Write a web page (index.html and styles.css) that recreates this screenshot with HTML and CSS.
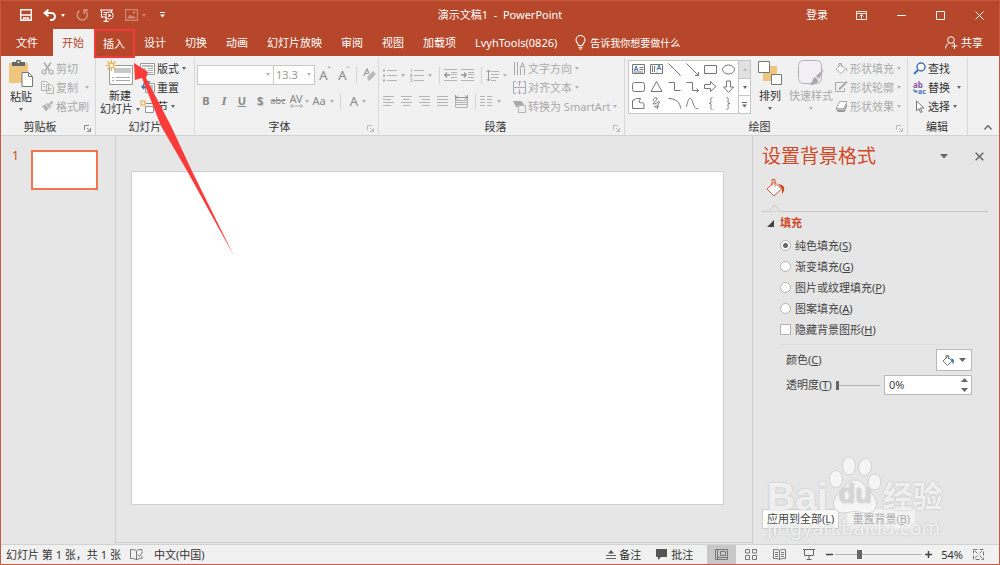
FILE: index.html
```html
<!DOCTYPE html>
<html lang="zh-CN">
<head>
  <meta charset="UTF-8">
  <meta name="viewport" content="width=device-width, initial-scale=1.0">
  <title>演示文稿1 - PowerPoint</title>
  <link rel="stylesheet" href="styles.css">
</head>
<body>
  <div class="window">
    <!-- 标题栏 -->
    <header class="titlebar">
      <div class="quick">
        <button type="button" aria-label="保存"><svg width="12" height="12" viewBox="0 0 12 12"><path d="M.7.7h10.6v10.6H.7z" fill="none" stroke="#fff" stroke-width="1.4"/><path d="M1 6h10M3.500 9h5v2.500h-5z" stroke="#fff" fill="none" stroke-width="1.300"/></svg></button>
        <button type="button" class="undo" aria-label="撤消"><svg width="14" height="12" viewBox="0 0 14 12"><path d="M2 4h6.500a3.500 3.500 0 0 1 0 7H7M5.500.7 1.500 4l4 3.300" fill="none" stroke="#fff" stroke-width="2"/></svg><i class="caret"></i></button>
        <button type="button" class="dim" aria-label="重复"><svg width="13" height="13" viewBox="0 0 13 13"><path d="M8.500 1.500a5 5 0 1 1-5 .3M8 5V1h4" fill="none" stroke="#fff" stroke-width="1.800"/></svg></button>
        <button type="button" class="play" aria-label="从头开始"><svg width="14" height="13" viewBox="0 0 14 13"><path d="M0 1h13M1.500 1v7h4M11.500 1v2M3.500 3.500h4M3.500 5.500h2M6 8v4M3.500 12.300h5" fill="none" stroke="#fff" stroke-width="1.200"/><circle cx="9.500" cy="6.500" r="3.700" fill="none" stroke="#fff"/><path d="M8.500 4.500v4l3-2z" fill="#fff"/></svg></button>
        <button type="button" class="dim undo" aria-label="图片"><svg width="13" height="12" viewBox="0 0 13 12"><path d="M.6.6h11.800v10.800H.6z" fill="none" stroke="#fff" stroke-width="1.200"/><path d="M2 9.500 5 5.500l2 2 1.500-1 2.500 3z" fill="#fff"/><circle cx="9" cy="3.500" r="1.300" fill="#fff"/></svg><i class="caret"></i></button>
        <button type="button" class="more" aria-label="自定义"><svg width="5" height="6" viewBox="0 0 5 6"><path d="M0 .5h5" stroke="#fff"/><path d="M0 2.500h5L2.500 5.500z" fill="#fff"/></svg></button>
      </div>
      <div class="doc-title">演示文稿1&nbsp; -&nbsp; PowerPoint</div>
      <div class="win-buttons">
        <button type="button" class="login">登录</button>
        <button type="button" aria-label="功能区显示选项"><svg width="11" height="9" viewBox="0 0 11 9"><path d="M.5.5h10v8H.5zM1 2.500h9M5.500 8V4M3.500 5.500l2-2 2 2" fill="none" stroke="#fff" stroke-width=".9"/></svg></button>
        <button type="button" aria-label="最小化"><svg width="9" height="9" viewBox="0 0 9 9"><path d="M0 4.500h9" stroke="#fff"/></svg></button>
        <button type="button" aria-label="最大化"><svg width="9" height="9" viewBox="0 0 9 9"><path d="M.5.5h8v8h-8z" stroke="#fff" fill="none"/></svg></button>
        <button type="button" aria-label="关闭"><svg width="9" height="9" viewBox="0 0 9 9"><path d="m.5.5 8 8m0-8-8 8" stroke="#fff"/></svg></button>
      </div>
    </header>

    <!-- 选项卡 -->
    <nav class="tabs">
      <button type="button" class="tab file">文件</button>
      <button type="button" class="tab active">开始</button>
      <button type="button" class="tab marked">插入</button>
      <button type="button" class="tab">设计</button>
      <button type="button" class="tab">切换</button>
      <button type="button" class="tab">动画</button>
      <button type="button" class="tab">幻灯片放映</button>
      <button type="button" class="tab">审阅</button>
      <button type="button" class="tab">视图</button>
      <button type="button" class="tab">加载项</button>
      <button type="button" class="tab">LvyhTools(0826)</button>
      <button type="button" class="tell"><svg width="11" height="15" viewBox="0 0 11 15"><path d="M3.500 10.500C3.500 8.500 1 7.500 1 5a4.500 4.500 0 0 1 9 0c0 2.500-2.500 3.500-2.500 5.500zM3.500 12.300h4M4 14h3" fill="none" stroke="#fff" stroke-width="1.100"/></svg>告诉我你想要做什么</button>
      <button type="button" class="share"><svg width="13" height="13" viewBox="0 0 13 13"><circle cx="6" cy="4" r="3.300" fill="none" stroke="#fff"/><path d="M.6 12.500C.8 9.500 2 8 4 7M7.500 7l1 .7M9.500 7v6M6.500 10h6" fill="none" stroke="#fff"/></svg>共享</button>
    </nav>

    <!-- 功能区 -->
    <section class="ribbon">
      <div class="group clipboard">
        <div class="group-body">
          <button type="button" class="big"><svg width="26" height="27" viewBox="0 0 26 27"><path d="M1 3h19v20H1z" fill="#efc680"/><path d="M4 2h4a2.500 2.500 0 0 1 5 0h4v4H4z" fill="#666"/><path d="M9.500 1.500h2v1.500h-2z" fill="#f1f1f1"/><path d="M14 12.500h6.500l4 4v10H14z" fill="#fff" stroke="#777"/><path d="M20.500 12.500v4h4" fill="none" stroke="#777"/></svg><span>粘贴</span><i class="caret"></i></button>
          <div class="stack off">
            <button type="button"><svg width="13" height="13" viewBox="0 0 13 13"><path d="m3 .5 5.500 8M10 .5l-5.500 8" stroke="#aaa" stroke-width="1.500"/><circle cx="3" cy="10" r="2" fill="none" stroke="#aaa" stroke-width="1.200"/><circle cx="10" cy="10" r="2" fill="none" stroke="#aaa" stroke-width="1.200"/></svg>剪切</button>
            <button type="button"><svg width="13" height="13" viewBox="0 0 13 13"><path d="M.5.500h5l2 2v7h-7zM5.500 3.500h4.500l2.500 2.500v6.500h-7z" fill="#f1f1f1" stroke="#b4b4b4"/><path d="M2 3.500h2M2 5.500h2M7 7.500h3.500M7 9.500h3.500" stroke="#b4b4b4"/></svg>复制<i class="caret push"></i></button>
            <button type="button"><svg width="13" height="13" viewBox="0 0 13 13"><path d="m1 6 4 5.500 3-3-3.500-4zM5 4l4 4.500L10.500 7 7 3zM8 3.500 11 .8l1.500 1.500-2.500 3z" fill="#b4b4b4"/></svg>格式刷</button>
          </div>
        </div>
        <div class="group-name">剪贴板<svg class="launch" width="7" height="7" viewBox="0 0 7 7"><path d="M.5 5V.5H5M3 3l3 3M6.500 3v3.500H3" fill="none" stroke="#888"/></svg></div>
      </div>

      <div class="group slides">
        <div class="group-body">
          <button type="button" class="big"><svg width="28" height="26" viewBox="0 0 28 26"><path d="M3.500 5.500h23v19h-23z" fill="#fff" stroke="#999"/><path d="M8 8h17v5H8z" fill="#c8c8c8"/><path d="M6 17.500h2m2 0h14M6 20.500h2m2 0h14" stroke="#aaa"/><path d="M5.500 0v11M0 5.500h11M1.500 1.500l8 8M9.500 1.500l-8 8" stroke="#eba94b" stroke-width="1.200"/><circle cx="5.500" cy="5.500" r="2.200" fill="#fff" stroke="#eba94b"/></svg><span>新建</span><span>幻灯片<i class="caret"></i></span></button>
          <div class="stack">
            <button type="button"><svg width="15" height="13" viewBox="0 0 15 13"><path d="M.5 1.500h14v11H.5z" fill="#fff" stroke="#999"/><path d="M2 3h11v2H2zM2 6h4v5H2z" fill="#bbb"/><path d="M7.500 6.500h5.500M7.500 8.500h5.500M7.500 10.500h5.500" stroke="#aaa"/></svg>版式<i class="caret"></i></button>
            <button type="button"><svg width="15" height="13" viewBox="0 0 15 13"><path d="M5.500 2.500h9v9h-9z" fill="#fff" stroke="#999"/><path d="M10 4h3v6h-3z" fill="#bbb"/><path d="M10 1C6 0 3 2 3.500 6.500M1.500 5l2 2.500 2-2" fill="none" stroke="#3e74b8" stroke-width="1.500"/></svg>重置</button>
            <button type="button"><svg width="15" height="13" viewBox="0 0 15 13"><path d="M5.500 6.500h8v6h-8z" fill="#fff" stroke="#999"/><path d="M6 3.500h8" stroke="#888"/><path d="M1 1h4v4H1z" fill="none" stroke="#eba94b" stroke-width="1.200"/></svg>节<i class="caret"></i></button>
          </div>
        </div>
        <div class="group-name">幻灯片</div>
      </div>

      <div class="group font off">
        <div class="group-body">
          <div class="row">
            <span class="combo"><select class="font-name" aria-label="字体"><option></option></select><i class="caret"></i></span>
            <span class="combo"><select class="font-size" aria-label="字号"><option>13.3</option></select><i class="caret"></i></span>
            <button type="button" class="fmt grow">A<sup>ˆ</sup></button>
            <button type="button" class="fmt grow">A<sup>ˇ</sup></button>
            <i class="bar"></i>
            <button type="button" class="fmt" aria-label="清除格式"><svg width="13" height="14" viewBox="0 0 13 14"><path d="M.8 8 4 1l2 4.500M2 5.500h3" fill="none" stroke="#999" stroke-width="1.200"/><path d="m4 9 6-6 3 3-6 6.500H5z" fill="#bbb"/></svg></button>
          </div>
          <div class="row">
            <button type="button" class="fmt"><b>B</b></button>
            <button type="button" class="fmt serif"><b><em>I</em></b></button>
            <button type="button" class="fmt"><b><u>U</u></b></button>
            <button type="button" class="fmt shadow"><b>S</b></button>
            <button type="button" class="fmt small"><s>abc</s></button>
            <button type="button" class="fmt spacing">AV<svg width="13" height="4" viewBox="0 0 13 4"><path d="M1 2h11M2.500 0 .5 2l2 2M10.500 0l2 2-2 2" fill="none" stroke="#aaa"/></svg></button><i class="caret"></i>
            <button type="button" class="fmt wide">Aa<i class="caret"></i></button>
            <i class="bar"></i>
            <button type="button" class="fmt wide color">A<i class="caret"></i></button>
          </div>
        </div>
        <div class="group-name">字体<svg class="launch" width="7" height="7" viewBox="0 0 7 7"><path d="M.5 5V.5H5M3 3l3 3M6.500 3v3.500H3" fill="none" stroke="#bbb"/></svg></div>
      </div>

      <div class="group para off">
        <div class="group-body">
          <div class="para-left">
            <div class="row">
              <button type="button" class="list" aria-label="项目符号"><svg width="14" height="13" viewBox="0 0 14 13"><path d="M0 1.500h2M0 6.500h2M0 11.500h2" stroke="#aaa" stroke-width="2"/><path d="M4 1.500h10M4 6.500h10M4 11.500h10" stroke="#b4b4b4"/></svg><i class="caret"></i></button>
              <button type="button" class="list" aria-label="编号"><svg width="14" height="13" viewBox="0 0 14 13"><path d="M1.500 0v3M.5 5h1.500v1.500H.5V8H2M.5 10h1.500v2.500H.5" fill="none" stroke="#aaa" stroke-width=".8"/><path d="M4 1.500h10M4 6.500h10M4 11.500h10" stroke="#b4b4b4"/></svg><i class="caret"></i></button>
              <i class="bar"></i>
              <button type="button" class="al" aria-label="减少缩进"><svg width="13" height="12" viewBox="0 0 13 12"><path d="M0 .5h13M7 3.500h6M7 5.500h6M7 8.500h6M0 11.500h13" stroke="#b4b4b4"/><path d="M6 6H1m2-2.500L.7 6 3 8.500" fill="none" stroke="#999" stroke-width="1.300"/></svg></button>
              <button type="button" class="al" aria-label="增加缩进"><svg width="13" height="12" viewBox="0 0 13 12"><path d="M0 .5h13M7 3.500h6M7 5.500h6M7 8.500h6M0 11.500h13" stroke="#b4b4b4"/><path d="M0 6h5M3 3.500 5.300 6 3 8.500" fill="none" stroke="#999" stroke-width="1.300"/></svg></button>
              <i class="bar"></i>
              <button type="button" class="list" aria-label="行距"><svg width="13" height="13" viewBox="0 0 13 13"><path d="M5 2.500h8M5 5.500h8M5 8.500h8M5 11.500h5" stroke="#b4b4b4"/><path d="M2.500 1v11M.5 3l2-2 2 2M.5 10l2 2 2-2" fill="none" stroke="#999"/></svg><i class="caret"></i></button>
            </div>
            <div class="row">
              <button type="button" class="al" aria-label="左对齐"><svg width="11" height="10" viewBox="0 0 11 10"><path d="M0 .5h11M0 3.500h8M0 6.500h11M0 9.500h8" stroke="#b4b4b4"/></svg></button>
              <button type="button" class="al" aria-label="居中"><svg width="11" height="10" viewBox="0 0 11 10"><path d="M0 .5h11M2 3.500h7M0 6.500h11M2 9.500h7" stroke="#b4b4b4"/></svg></button>
              <button type="button" class="al" aria-label="右对齐"><svg width="11" height="10" viewBox="0 0 11 10"><path d="M0 .5h11M3 3.500h8M0 6.500h11M3 9.500h8" stroke="#b4b4b4"/></svg></button>
              <button type="button" class="al" aria-label="两端对齐"><svg width="11" height="10" viewBox="0 0 11 10"><path d="M0 .5h11M0 3.500h11M0 6.500h11M0 9.500h11" stroke="#b4b4b4"/></svg></button>
              <button type="button" class="al" aria-label="分散对齐"><svg width="13" height="13" viewBox="0 0 13 13"><path d="M.5 0v5M12.500 0v5M1 2.500h11M3 .5l-2 2 2 2M10 .5l2 2-2 2" fill="none" stroke="#999"/><path d="M.5 5.500h12v7H.5zM1 7.500h11M1 9.500h11" fill="none" stroke="#b4b4b4"/></svg></button>
              <i class="bar"></i>
              <button type="button" class="list cols" aria-label="分栏"><svg width="12" height="10" viewBox="0 0 12 10"><path d="M0 .5h5m2 0h5M0 3.500h5m2 0h5M0 6.500h5m2 0h5M0 9.500h5m2 0h5" stroke="#b4b4b4"/></svg><i class="caret"></i></button>
            </div>
          </div>
          <div class="stack">
            <button type="button"><svg width="13" height="14" viewBox="0 0 13 14"><path d="M1.500 0v13M4.500 0v13M7.500 7v6M11.500 7v6M7 7l2.500-6.500L12 7M8 4.500h3" fill="none" stroke="#aaa"/></svg>文字方向<i class="caret"></i></button>
            <button type="button"><svg width="13" height="13" viewBox="0 0 13 13"><path d="M3 .5H.5v12H3M10 .5h2.500v12H10" fill="none" stroke="#aaa"/><path d="M1 6.500h11M6.500 0v5M4.500 2l2-2 2 2M6.500 13V8M4.500 11l2 2 2-2" fill="none" stroke="#b9a5b4"/></svg>对齐文本<i class="caret"></i></button>
            <button type="button"><svg width="13" height="13" viewBox="0 0 13 13"><path d="M0 1h8l3 3-3 3H3z" fill="#aaa"/><path d="M5.500 5.500h7v7h-7z" fill="#f1edf1" stroke="#b4b4b4"/></svg>转换为 SmartArt<i class="caret"></i></button>
          </div>
        </div>
        <div class="group-name">段落<svg class="launch" width="7" height="7" viewBox="0 0 7 7"><path d="M.5 5V.5H5M3 3l3 3M6.500 3v3.500H3" fill="none" stroke="#bbb"/></svg></div>
      </div>

      <div class="group draw">
        <div class="group-body">
          <div class="gallery">
            <div class="shapes">
              <svg viewBox="0 0 13 13"><path d="M.5 1.500h12v9H.5z" class="ln"/><path d="m2 8 2-5 2 5M3 6.500h2" stroke="#3e74b8" fill="none"/><path d="M7.500 4.500h4M7.500 6.500h4M2 9h9" class="ln"/></svg>
              <svg viewBox="0 0 13 13"><path d="M.5 1.500h12v9H.5zM2.500 3v6M4.500 3v6M7 8.500v1" class="ln"/><path d="m7 7 2-5 2 5M8 5.500h2" stroke="#3e74b8" fill="none"/></svg>
              <svg viewBox="0 0 13 13"><path d="m.5.5 12 12" class="ln"/></svg>
              <svg viewBox="0 0 13 13"><path d="m.5.5 12 12M12.500 9v3.500H9" class="ln"/></svg>
              <svg viewBox="0 0 13 13"><path d="M.5 2.500h12v8H.5z" class="ln"/></svg>
              <svg viewBox="0 0 13 13"><ellipse cx="6.500" cy="6.500" rx="6" ry="4.500" class="ln"/></svg>
              <svg viewBox="0 0 13 13"><rect x=".5" y="2.500" width="12" height="9" rx="2" class="ln"/></svg>
              <svg viewBox="0 0 13 13"><path d="m6.500 1.500 5.500 10H1z" class="ln"/></svg>
              <svg viewBox="0 0 13 13"><path d="M.5 2.500h6v8h6" class="ln"/></svg>
              <svg viewBox="0 0 13 13"><path d="M.5 2.500h6v8h6M10.500 8.500l2 2-2 2" class="ln"/></svg>
              <svg viewBox="0 0 13 13"><path d="M.5 4.500h6V1.500l5.500 5-5.500 5v-3h-6z" class="ln"/></svg>
              <svg viewBox="0 0 13 13"><path d="M4.500 1v6H1.500l5 5.500 5-5.500h-3V1z" class="ln"/></svg>
              <svg viewBox="0 0 13 13"><path d="M.5 11.500v-8l4-2h4L7 5c2 2 5-1 5 3v3.500z" class="ln"/></svg>
              <svg viewBox="0 0 13 13"><path d="M4 4c-3-2 4-5 3-2S1 7 4 7s6-5 5-1-6 3-4 4 5-3 3 0l-1 2" class="ln"/></svg>
              <svg viewBox="0 0 13 13"><path d="M.5 1.500c7 0 12 4 12 10" class="ln"/></svg>
              <svg viewBox="0 0 13 13"><path d="M.5 9.500C3-2 5 0 7 6s3 6 5.500 5.500" class="ln"/></svg>
              <svg viewBox="0 0 13 13"><path d="M8.500.5C6 .5 7 3 7 5S6 6.500 5 6.500c1 0 2 0 2 1.500s-1 4.500 1.500 4.500" class="ln"/></svg>
              <svg viewBox="0 0 13 13"><path d="M4.500.5C7 .5 6 3 6 5s1 1.500 2 1.500C7 6.500 6 6.500 6 8s1 4.500-1.500 4.500" class="ln"/></svg>
            </div>
            <div class="scroller">
              <button type="button" class="up" aria-label="上一行"><i class="caret flip"></i></button>
              <button type="button" aria-label="下一行"><i class="caret"></i></button>
              <button type="button" aria-label="其他"><svg width="5" height="6" viewBox="0 0 5 6"><path d="M0 .5h5" stroke="#666"/><path d="M0 2.500h5L2.500 5.500z" fill="#666"/></svg></button>
            </div>
          </div>
          <button type="button" class="big"><svg width="26" height="26" viewBox="0 0 26 26"><path d="M10 6h10v8H10zM6 13h9v8H6z" fill="#efc680"/><path d="M1.500 1.500h11v11h-11zM14.500 14.500h10v10h-10z" fill="#fff" stroke="#777"/></svg><span>排列</span><i class="caret"></i></button>
          <button type="button" class="big styles off"><svg width="26" height="26" viewBox="0 0 26 26"><rect x=".5" y=".5" width="23" height="23" rx="5" fill="#f3edf5" stroke="#b4b4b4"/><path d="m26 9-8 7 3 3zM17 17l3.500 3.500c-2 4-6 5-9 4.500 3-1 2-6 5.500-8z" fill="#aaa"/></svg><span>快速样式</span><i class="caret"></i></button>
          <div class="stack off">
            <button type="button"><svg width="13" height="13" viewBox="0 0 13 13"><path d="m5.500 2.500 5 4.500-4.500 4.500L1 7zM4 5V1.500h2.500V5" fill="#fff" stroke="#aaa"/><path d="M10.500 5c2 1 2 3 1.500 5z" fill="#aaa"/></svg>形状填充<i class="caret"></i></button>
            <button type="button"><svg width="13" height="13" viewBox="0 0 13 13"><path d="M9 1.500H.5v9h9V7" fill="none" stroke="#aaa"/><path d="m4 8.500 8-8" stroke="#aaa" stroke-width="2"/></svg>形状轮廓<i class="caret"></i></button>
            <button type="button"><svg width="13" height="13" viewBox="0 0 13 13"><path d="M3 9.500h6l3-7v4L9.500 12H3L.5 9z" fill="#999"/><path d="M4.500 1.500h7.500l-3 7H1z" fill="#fff" stroke="#aaa"/></svg>形状效果<i class="caret"></i></button>
          </div>
        </div>
        <div class="group-name">绘图<svg class="launch" width="7" height="7" viewBox="0 0 7 7"><path d="M.5 5V.5H5M3 3l3 3M6.500 3v3.500H3" fill="none" stroke="#bbb"/></svg></div>
      </div>

      <div class="group edit">
        <div class="group-body">
          <div class="stack">
            <button type="button"><svg width="13" height="13" viewBox="0 0 13 13"><circle cx="8" cy="5" r="4" fill="#fff" stroke="#3e74b8" stroke-width="1.500"/><path d="m5 8-4 4" stroke="#3e74b8" stroke-width="2"/></svg>查找</button>
            <button type="button"><svg width="13" height="16" viewBox="0 0 13 16"><text x="0" y="8" class="ab">ab</text><text x="5" y="14" class="ac">ac</text><path d="M1 9v2.500h3M2.500 10 4 11.500 2.500 13" fill="none" stroke="#3e74b8"/></svg>替换<i class="caret push"></i></button>
            <button type="button"><svg width="13" height="13" viewBox="0 0 13 13"><path d="M3.500 1v10l2.500-2.500 1.500 4 1.500-.7-1.500-3.800H11z" fill="#fff" stroke="#777"/></svg>选择<i class="caret"></i></button>
          </div>
        </div>
        <div class="group-name">编辑</div>
      </div>
      <button type="button" class="collapse" aria-label="折叠功能区"><svg width="8" height="5" viewBox="0 0 8 5"><path d="m.5 4.500 3.500-4 3.500 4" fill="none" stroke="#666" stroke-width="1.300"/></svg></button>
    </section>

    <main class="work">
      <aside class="thumbs">
        <span class="num">1</span>
        <div class="thumb"></div>
      </aside>
      <div class="canvas"><div class="slide"></div></div>

      <!-- 设置背景格式 -->
      <aside class="pane">
        <div class="pane-head">
          <h2>设置背景格式</h2>
          <button type="button" aria-label="选项"><svg width="8" height="5" viewBox="0 0 8 5"><path d="M0 0h8L4 4.500z" fill="#666"/></svg></button>
          <button type="button" aria-label="关闭"><svg width="9" height="9" viewBox="0 0 9 9"><path d="m.7.7 7.600 7.600m0-7.600L.7 8.300" stroke="#666" stroke-width="1.500"/></svg></button>
        </div>
        <div class="pane-tabs">
          <button type="button" aria-label="填充"><svg width="20" height="20" viewBox="0 0 20 20"><path d="m8.500 4 7 7-7.500 7-7-7z" fill="#fff" stroke="#d9532c"/><path d="M6 7.500V1.500h3v7" fill="none" stroke="#d9532c"/><path d="M12.500 6c7 1 7 6 3.500 10V11z" fill="#d24726"/></svg></button>
        </div>
        <svg class="notch" width="15" height="8" viewBox="0 0 15 8"><path d="M0 7.500h1.500l6-6.500 6 6.500H15" fill="#e6e6e6" stroke="#c6c6c6"/></svg>
        <h3><svg width="7" height="7" viewBox="0 0 7 7"><path d="M7 0v7H0z" fill="#444"/></svg>填充</h3>
        <div class="options">
          <label><input type="radio" name="fill" checked><span>纯色填充(<u>S</u>)</span></label>
          <label><input type="radio" name="fill"><span>渐变填充(<u>G</u>)</span></label>
          <label><input type="radio" name="fill"><span>图片或纹理填充(<u>P</u>)</span></label>
          <label><input type="radio" name="fill"><span>图案填充(<u>A</u>)</span></label>
          <label><input type="checkbox"><span>隐藏背景图形(<u>H</u>)</span></label>
        </div>
        <div class="props">
          <div class="prop">
            <label for="color">颜色(<u>C</u>)</label>
            <button type="button" id="color" class="color-btn"><svg width="13" height="13" viewBox="0 0 13 13"><path d="m5.500 2.500 4.500 4.500-4.500 4.500L1 7zM4 5V1.500h2.500V5" fill="#fff" stroke="#777"/><path d="M9 4.500c3.500 0 3.500 3 2 6z" fill="#3e74b8"/></svg><svg width="7" height="4" viewBox="0 0 7 4"><path d="M0 0h7L3.500 4z" fill="#666"/></svg></button>
          </div>
          <div class="prop">
            <label for="alpha">透明度(<u>T</u>)</label>
            <input type="range" class="alpha-range" min="0" max="100" value="0" aria-label="透明度">
            <span class="spin"><input type="text" id="alpha" value="0%"><svg width="7" height="14" viewBox="0 0 7 14"><path d="M0 4h7L3.500 0zM0 10h7L3.500 14z" fill="#666"/></svg></span>
          </div>
        </div>
        <div class="pane-foot">
          <button type="button">应用到全部(<u>L</u>)</button>
          <button type="button" disabled>重置背景(<u>B</u>)</button>
        </div>
        <div class="watermark">
          <div class="mark-main"><span class="bai">Bai</span><span class="paw"><svg width="54" height="58" viewBox="0 0 54 58"><g fill="#f8f8f8" stroke="#cfcfcf"><ellipse cx="8" cy="23" rx="6.500" ry="8.500"/><ellipse cx="21" cy="10" rx="6.500" ry="9"/><ellipse cx="37" cy="11" rx="6.500" ry="8.500" transform="rotate(10 37 11)"/><ellipse cx="46.500" cy="26" rx="6.500" ry="8"/><path d="M27 24c8 0 10 8 16 13 8 7 8 19-4 20-5 0-8-1.500-12-1.500S20 57 15 57C3 56 3 44 11 37c6-5 8-13 16-13z"/></g></svg><span class="du">du</span></span><span class="jy">经验</span></div>
          <div class="mark-url">jingyan.baidu.com</div>
        </div>
      </aside>
    </main>

    <!-- 状态栏 -->
    <footer class="status">
      <span>幻灯片 第 1 张，共 1 张</span>
      <button type="button" class="proof" aria-label="拼写检查"><svg width="13" height="11" viewBox="0 0 13 11"><path d="M6.500 2C5 .5 3 .5.500.5v9c2.500 0 4.500 0 6 1.500zM6.500 2c1-1.500 3-1.500 5.500-1.500v2M12 7v2.500c-2 0-4 0-5.500 1.500" fill="none" stroke="#777"/><path d="m8 5.500 1.500 2L12.500 3" fill="none" stroke="#777"/></svg></button>
      <span>中文(中国)</span>
      <div class="status-right">
        <button type="button" class="note"><svg width="10" height="9" viewBox="0 0 10 9"><path d="M2 3.500h6L5 0z" fill="#555"/><path d="M0 5.500h10M0 8.500h10" stroke="#666"/></svg>备注</button>
        <button type="button" class="note"><svg width="13" height="11" viewBox="0 0 13 11"><path d="M1 0h11v8H6l-3 3V8H1z" fill="#555"/></svg>批注</button>
        <button type="button" class="view on" aria-label="普通视图"><svg width="13" height="11" viewBox="0 0 13 11"><path d="M.5.5h12v10H.5zM2.500 1v9M5.500 2.500h5v4h-5zM3 8.500h9" fill="none" stroke="#777"/></svg></button>
        <button type="button" class="view" aria-label="幻灯片浏览"><svg width="12" height="11" viewBox="0 0 12 11"><path d="M.5.5h4v3.500h-4zM7.500.5h4v3.500h-4zM.5 6.500h4v4h-4zM7.500 6.500h4v4h-4z" fill="none" stroke="#777"/></svg></button>
        <button type="button" class="view" aria-label="阅读视图"><svg width="13" height="11" viewBox="0 0 13 11"><path d="M6.500 1.500C5 .5 3 .5.500.5v9c2.500 0 4.500 0 6 1 1.500-1 3.500-1 6-1v-9c-2.500 0-4.500 0-6 1v9M2 3.500h3M2 5.500h3M2 7.500h3M8 3.500h3M8 5.500h3M8 7.500h3" fill="none" stroke="#777"/></svg></button>
        <button type="button" class="view" aria-label="幻灯片放映"><svg width="12" height="11" viewBox="0 0 12 11"><path d="M0 .5h12M1.500 1v5.500h9V1M6 7v3M3.500 10.500h5" fill="none" stroke="#666"/></svg></button>
        <button type="button" class="step" aria-label="缩小"><svg width="7" height="7" viewBox="0 0 7 7"><path d="M0 3.500h7" stroke="#444" stroke-width="1.500"/></svg></button>
        <input type="range" class="zoom" min="0" max="100" value="26" aria-label="缩放">
        <button type="button" class="step" aria-label="放大"><svg width="7" height="7" viewBox="0 0 7 7"><path d="M0 3.500h7M3.500 0v7" stroke="#444" stroke-width="1.500"/></svg></button>
        <span class="pct">54%</span>
        <button type="button" class="fit" aria-label="适应窗口"><svg width="11" height="11" viewBox="0 0 11 11"><path d="M.5.5h10v10H.5z" fill="none" stroke="#777" stroke-dasharray="4 2"/><path d="m2 2 2.500 2.500M9 2 6.500 4.500M2 9l2.500-2.500M9 9 6.500 6.500" stroke="#777"/></svg></button>
      </div>
    </footer>

    <svg class="pointer" width="104" height="196" viewBox="0 0 104 196"><path d="M2 2 3 19l7-2 10 25 9 23 25 43 48 87-43-87-20-43-25-48 2-6z" fill="#fb3a3a"/></svg>
  </div>
</body>
</html>
```
FILE: styles.css
```css
* {
  box-sizing: border-box;
}
body {
  margin: 0;
  font-family: "Noto Sans", "Noto Sans CJK SC", sans-serif;
  font-size: 11px;
  line-height: 16px;
  color: #333;
}
button {
  font: inherit;
  color: inherit;
  background: none;
  border: none;
  padding: 0;
  display: flex;
  align-items: center;
  white-space: nowrap;
}
svg {
  flex: none;
}
.window {
  position: relative;
  height: 100vh;
  display: flex;
  flex-direction: column;
  border: 1px solid #c8593f;
  background: #e6e6e6;
  overflow: hidden;
}
.caret {
  flex: none;
  display: inline-block;
  border: 2px solid transparent;
  border-top: 3px solid #666;
  border-bottom: none;
}
.off {
  color: #aaa;
}
.off .caret {
  border-top-color: #b4b4b4;
}
.flip {
  transform: rotate(180deg);
}

/* title bar */
.titlebar {
  display: grid;
  grid-template-columns: 1fr auto 1fr;
  align-items: center;
  height: 28px;
  flex: none;
  background: #b7472a;
  color: #fff;
}
.quick {
  display: flex;
  gap: 11px;
  padding-left: 19px;
}
.quick .caret {
  border-top-color: #fff;
}
.undo {
  gap: 4px;
}
.more {
  margin-left: 3px;
}
.dim {
  opacity: 0.35;
}
.win-buttons {
  display: flex;
  justify-content: flex-end;
  gap: 30px;
  padding-right: 15px;
}
.login {
  margin-right: -2px;
}

/* tabs */
.tabs {
  display: flex;
  height: 27px;
  flex: none;
  background: #b7472a;
  color: #fff;
}
.tab {
  padding: 0 10px 0 9px;
}
.file {
  padding: 0 15px;
}
.active {
  background: #f1f1f1;
  color: #b7472a;
}
.marked {
  border: 2px solid #f33a3a;
  padding: 0 8px 0 7px;
  height: 29px;
  z-index: 1;
}
.tell {
  gap: 4px;
  margin-left: 8px;
  font-size: 10px;
}
.share {
  gap: 3px;
  margin-left: auto;
  padding-right: 16px;
}

/* ribbon */
.ribbon {
  display: flex;
  height: 80px;
  flex: none;
  background: #f1f1f1;
  border-bottom: 1px solid #d2d2d2;
}
.group {
  display: flex;
  flex-direction: column;
  flex: none;
  padding-top: 1px;
  margin-top: 2px;
  border-right: 1px solid #d8d8d8;
}
.group-body {
  display: flex;
  flex: 1;
}
.group-name {
  position: relative;
  text-align: center;
  color: #333;
  padding-right: 16px;
}
.launch {
  position: absolute;
  right: 4px;
  bottom: 3px;
}
.big {
  flex-direction: column;
  line-height: 13px;
  align-self: flex-start;
  padding-top: 1px;
}
.big > svg {
  margin-bottom: 3px;
}
.big > .caret {
  margin-top: 5px;
}
.big span .caret {
  margin: 0 0 2px 3px;
}
.stack button {
  height: 19px;
  gap: 2px;
  width: 100%;
}
.stack .caret {
  margin-left: 1px;
}
.stack .push {
  margin-left: 5px;
}
.clipboard {
  width: 95px;
}
.clipboard .big {
  margin: 0 7px;
}
.slides {
  width: 99px;
}
.slides .big {
  margin: 0 0 0 4px;
}
.slides .group-name {
  padding-right: 0;
}
.font {
  width: 184px;
  padding-left: 2px;
}
.font .group-body,
.para-left {
  display: flex;
  flex-direction: column;
  gap: 6px;
  padding-top: 6px;
}
.row {
  display: flex;
  align-items: center;
  height: 20px;
}
.combo {
  position: relative;
}
.combo select {
  appearance: none;
  display: block;
  height: 20px;
  border: 1px solid #c8c8c8;
  background: #fff;
  padding: 0 2px;
  color: #999;
  font: inherit;
}
.combo .caret {
  position: absolute;
  right: 4px;
  top: 8px;
}
.font-name {
  width: 77px;
}
.font-size {
  width: 42px;
}
.combo + .combo {
  margin-left: -1px;
}
.fmt {
  width: 18px;
  justify-content: center;
  color: #888;
}
.serif {
  font-family: "Liberation Serif", serif;
  font-size: 13px;
}
.shadow {
  text-shadow: 1px 1px 1px #bbb;
}
.small {
  font-size: 9px;
}
.spacing {
  flex-direction: column;
  line-height: 10px;
}
.wide {
  width: 28px;
  gap: 4px;
}
.color {
  font-size: 13px;
}
.grow {
  font-size: 13px;
  margin-left: 1px;
}
.grow sup {
  font-size: 8px;
  line-height: 8px;
  align-self: flex-start;
}
.bar {
  width: 1px;
  height: 17px;
  margin: 0 3px;
  background: #d4d4d4;
}
.para {
  width: 246px;
  padding-left: 4px;
}
.para-left {
  width: 130px;
}
.list {
  gap: 4px;
  width: 27px;
}
.cols {
  gap: 5px;
}
.al {
  width: 18px;
}
.para .bar {
  margin: 0 4px 0 2px;
}
.draw {
  width: 283px;
  padding-left: 3px;
}
.gallery {
  display: flex;
  align-self: flex-start;
  height: 54px;
  margin-top: 1px;
  background: #fff;
  border: 1px solid #c6c6c6;
}
.shapes {
  display: grid;
  grid-template-columns: repeat(6, 18px);
  grid-template-rows: repeat(3, 17px);
  place-items: center;
  width: 109px;
}
.shapes svg {
  width: 13px;
  height: 13px;
}
.ln {
  fill: none;
  stroke: #777;
}
.scroller {
  display: flex;
  flex-direction: column;
  width: 12px;
  border-left: 1px solid #c6c6c6;
}
.scroller button {
  flex: 1;
  justify-content: center;
}
.scroller button + button {
  border-top: 1px solid #c6c6c6;
}
.scroller .up {
  background: #e1e1e1;
}
.scroller .up .caret {
  border-top-color: #bbb;
}
.draw .big {
  margin: 0 6px;
}
.draw .styles {
  margin: 0 2px 0 0;
}
.edit {
  width: 60px;
  padding-left: 5px;
}
.edit .group-name {
  padding-right: 6px;
}
.ab,
.ac {
  font-size: 8px;
  font-weight: bold;
  fill: #8a56a8;
}
.ac {
  font-size: 7px;
  fill: #3e74b8;
}
.collapse {
  margin-left: auto;
  padding: 0 7px 5px 0;
  align-self: flex-end;
}

/* work area */
.work {
  flex: 1;
  min-height: 0;
  display: flex;
}
.thumbs {
  flex: none;
  width: 115px;
  display: flex;
  align-items: flex-start;
  gap: 12px;
  padding: 14px 0 0 11px;
  border-right: 1px solid #cdcdcd;
}
.num {
  line-height: 12px;
  font-size: 12px;
  color: #d24726;
}
.thumb {
  width: 67px;
  height: 40px;
  background: #fff;
  border: 2px solid #f0744f;
}
.canvas {
  flex: 1;
  display: flex;
  padding: 35px 28px 37px 15px;
  border-bottom: 1px solid #cdcdcd;
  margin-bottom: 1px;
}
.slide {
  flex: 1;
  background: #fff;
  border: 1px solid #d0d0d0;
}

/* format pane */
.pane {
  position: relative;
  flex: none;
  width: 247px;
  display: flex;
  flex-direction: column;
  padding: 6px 11px 15px 9px;
  border-left: 1px solid #cdcdcd;
  color: #444;
}
.pane-head {
  display: flex;
  align-items: center;
  gap: 27px;
}
.pane h2 {
  flex: 1;
  margin: 0;
  font-size: 19px;
  line-height: 28px;
  font-weight: normal;
  color: #d24726;
}
.pane-head button:last-child {
  margin-right: 4px;
}
.pane-tabs {
  height: 42px;
  padding: 8px 0 0 4px;
  border-bottom: 1px solid #c6c6c6;
}
.notch {
  margin: -8px 0 0 5px;
}
.pane h3 {
  display: flex;
  align-items: center;
  gap: 6px;
  margin: 3px 0 4px 5px;
  font-size: 11px;
  line-height: 16px;
  color: #d24726;
}
.options {
  display: flex;
  flex-direction: column;
  margin: 0 17px 0 18px;
  padding-bottom: 4px;
  border-bottom: 1px solid #e0e0e0;
}
.options label {
  display: flex;
  align-items: center;
  gap: 4px;
  height: 21px;
}
.options input {
  appearance: none;
  margin: 0;
  width: 11px;
  height: 11px;
  background: #fff;
  border: 1px solid #b4b4b4;
}
.options input[type="radio"] {
  border-radius: 50%;
}
.options input:checked {
  background: radial-gradient(#666 0 2px, #fff 3px);
}
.props {
  display: flex;
  flex-direction: column;
  gap: 4px;
  margin: 4px 16px 0 24px;
}
.prop {
  display: flex;
  align-items: center;
  justify-content: space-between;
}
.color-btn {
  gap: 4px;
  justify-content: center;
  width: 36px;
  height: 22px;
  background: #fff;
  border: 1px solid #b9b9b9;
}
input[type="range"] {
  appearance: none;
  margin: 0;
  height: 12px;
  background: linear-gradient(#b4b4b4, #b4b4b4) center / 100% 1px no-repeat;
}
input[type="range"]::-webkit-slider-thumb {
  appearance: none;
  width: 3px;
  height: 9px;
  background: #666;
}
.alpha-range {
  width: 44px;
}
.spin {
  display: flex;
  align-items: center;
  width: 88px;
  height: 20px;
  padding-right: 3px;
  background: #fff;
  border: 1px solid #b9b9b9;
}
.spin input {
  flex: 1;
  width: 0;
  border: none;
  padding: 0 4px;
  font: inherit;
  color: #444;
}
.pane-foot {
  display: flex;
  gap: 8px;
  margin-top: auto;
}
.pane-foot button {
  height: 20px;
  padding: 0 4px;
  background: #fdfdfd;
  border: 1px solid #cfcfcf;
}
.pane-foot button:disabled {
  color: #aaa;
  background: #f3f3f3;
  border-color: #eee;
}
.watermark {
  position: absolute;
  left: 14px;
  bottom: 2px;
  color: rgba(255, 255, 255, 0.8);
  text-shadow: 0 0 2px #b4b4b4;
  pointer-events: none;
}
.mark-main {
  display: flex;
  align-items: flex-end;
}
.bai {
  font: bold 39px/34px "Liberation Sans", sans-serif;
}
.paw {
  position: relative;
  opacity: 0.85;
}
.paw svg {
  display: block;
}
.du {
  position: absolute;
  left: 11px;
  bottom: 6px;
  font: bold 27px/27px "Liberation Sans", sans-serif;
  color: #d4d4d4;
}
.jy {
  font: bold 30px/34px "Noto Sans CJK SC", sans-serif;
  margin-left: 1px;
  padding-bottom: 3px;
}
.mark-url {
  font-size: 20px;
  line-height: 28px;
}

/* status bar */
.status {
  flex: none;
  display: flex;
  align-items: center;
  height: 20px;
  padding-left: 5px;
  background: #f1f1f1;
  border-top: 1px solid #d2d2d2;
}
.proof {
  margin: 0 11px 0 9px;
}
.status-right {
  display: flex;
  align-items: center;
  align-self: stretch;
  margin-left: auto;
}
.note {
  gap: 3px;
  margin-right: 14px;
}
.view {
  width: 29px;
  align-self: stretch;
  justify-content: center;
}
.on {
  background: #c8c8c8;
}
.step {
  width: 12px;
  justify-content: center;
}
.zoom {
  width: 87px;
}
input.zoom::-webkit-slider-thumb {
  width: 5px;
}
.pct {
  margin: 0 10px 0 7px;
}
.fit {
  margin-right: 15px;
}

/* arrow over the ribbon and slide */
.pointer {
  position: absolute;
  left: 131px;
  top: 60px;
  pointer-events: none;
}
```
